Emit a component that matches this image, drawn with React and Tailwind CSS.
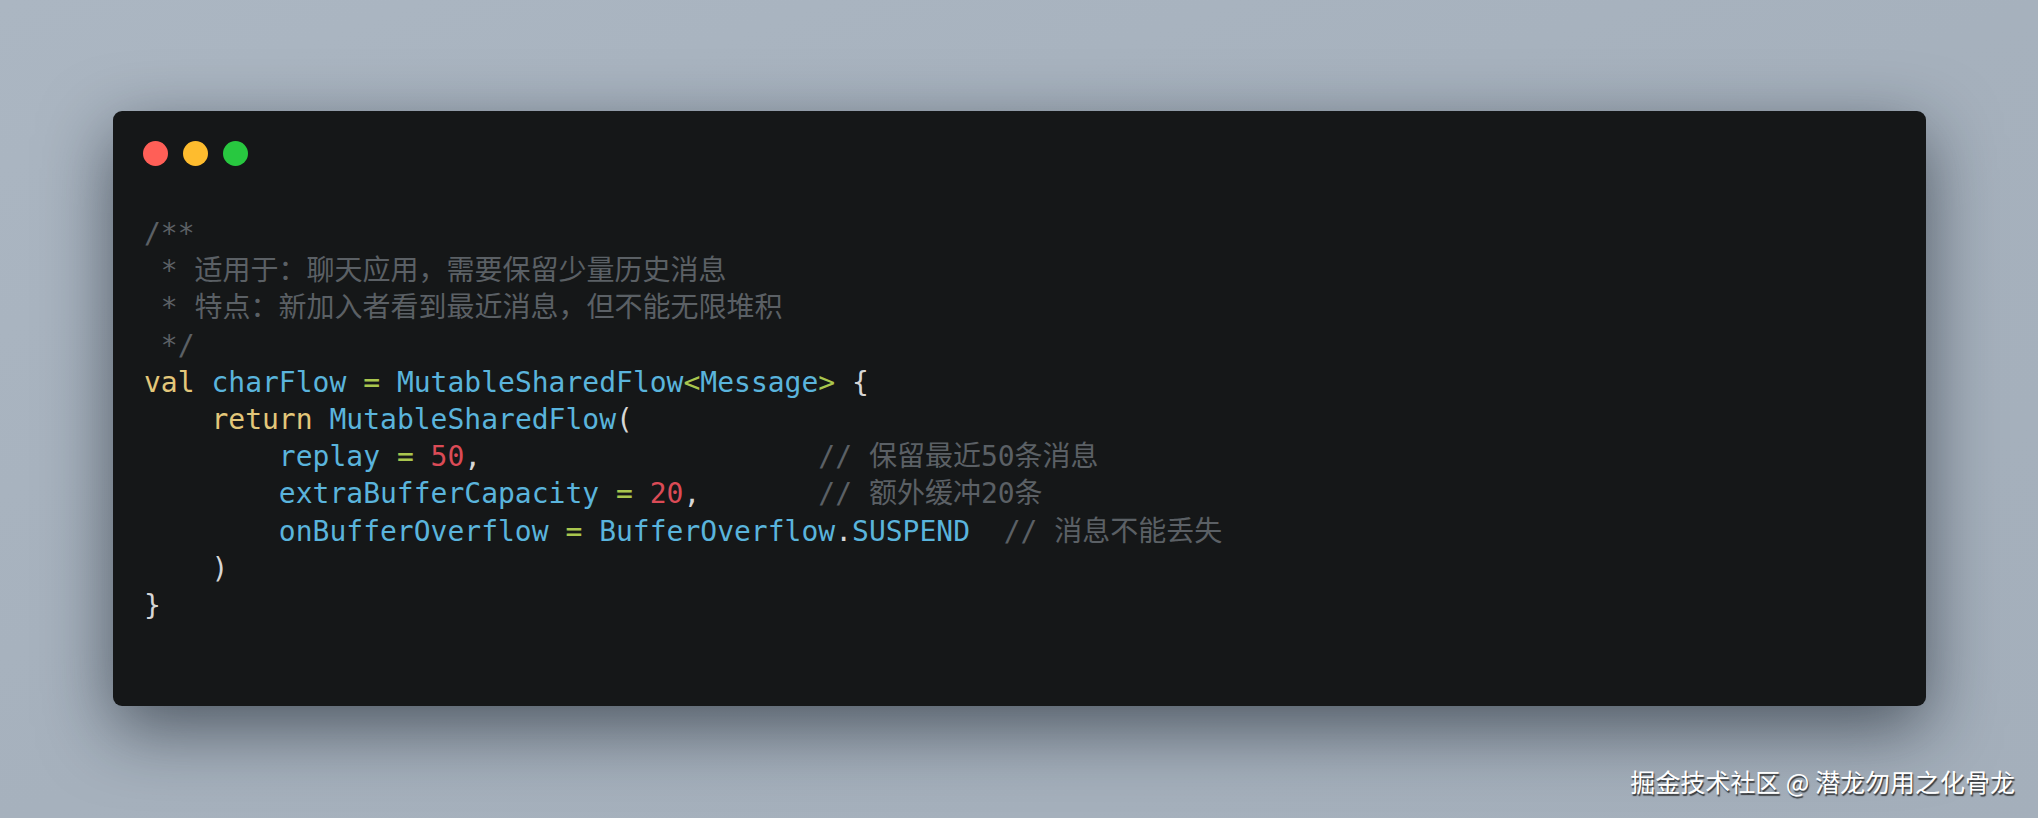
const mono = "font-['DejaVu_Sans_Mono','Noto_Sans_CJK_SC',monospace]"

const C = {
  kw: 'text-[#e3c77a]',
  id: 'text-[#5ab4dc]',
  op: 'text-[#a9c64e]',
  num: 'text-[#db4b56]',
  cm: 'text-[#5b6065]',
  pl: 'text-[#d6d6d6]',
}

const lines = [
  [['cm', '/**']],
  [['cm', ' * 适用于：聊天应用，需要保留少量历史消息']],
  [['cm', ' * 特点：新加入者看到最近消息，但不能无限堆积']],
  [['cm', ' */']],
  [['kw', 'val'], ['pl', ' '], ['id', 'charFlow'], ['pl', ' '], ['op', '='], ['pl', ' '], ['id', 'MutableSharedFlow'], ['op', '<'], ['id', 'Message'], ['op', '>'], ['pl', ' {']],
  [['pl', '    '], ['kw', 'return'], ['pl', ' '], ['id', 'MutableSharedFlow'], ['pl', '(']],
  [['pl', '        '], ['id', 'replay'], ['pl', ' '], ['op', '='], ['pl', ' '], ['num', '50'], ['pl', ',                    '], ['cm', '// 保留最近50条消息']],
  [['pl', '        '], ['id', 'extraBufferCapacity'], ['pl', ' '], ['op', '='], ['pl', ' '], ['num', '20'], ['pl', ',       '], ['cm', '// 额外缓冲20条']],
  [['pl', '        '], ['id', 'onBufferOverflow'], ['pl', ' '], ['op', '='], ['pl', ' '], ['id', 'BufferOverflow'], ['pl', '.'], ['id', 'SUSPEND'], ['pl', '  '], ['cm', '// 消息不能丢失']],
  [['pl', '    )']],
  [['pl', '}']],
]

function CodeLine({ tokens }) {
  return (
    <div className="h-[37.2px] leading-[37.2px] whitespace-pre">
      {tokens.map(([k, t], i) => (
        <span key={i} className={C[k]}>{t}</span>
      ))}
    </div>
  )
}

export default function App() {
  return (
    <div className="w-[2038px] h-[818px] overflow-hidden bg-gradient-to-br from-[#abb6c2] via-[#a6b1bd] to-[#a4afbb] pt-[111px] pl-[113px] flex flex-col">
      <div className="w-[1813px] h-[595px] shrink-0 rounded-[9px] bg-[#151718] shadow-[0_22px_70px_rgba(20,28,38,0.6)] pl-[30px] pt-[30px]">
        <div className="flex gap-[15px]">
          <span className="w-[25px] h-[25px] rounded-full bg-[#ff5f57]" />
          <span className="w-[25px] h-[25px] rounded-full bg-[#febc2e]" />
          <span className="w-[25px] h-[25px] rounded-full bg-[#28c840]" />
        </div>
        <div className={`${mono} mt-[49px] pl-[1px] text-[28px]`}>
          {lines.map((l, i) => <CodeLine key={i} tokens={l} />)}
        </div>
      </div>
      <div className="flex justify-end pr-[23px] mt-[59px]">
        <span className="font-['Noto_Sans_CJK_SC',sans-serif] text-[25px] leading-[32px] text-white [text-shadow:1px_2px_1px_rgba(30,30,30,0.8)]">
          掘金技术社区 @ 潜龙勿用之化骨龙
        </span>
      </div>
    </div>
  )
}
